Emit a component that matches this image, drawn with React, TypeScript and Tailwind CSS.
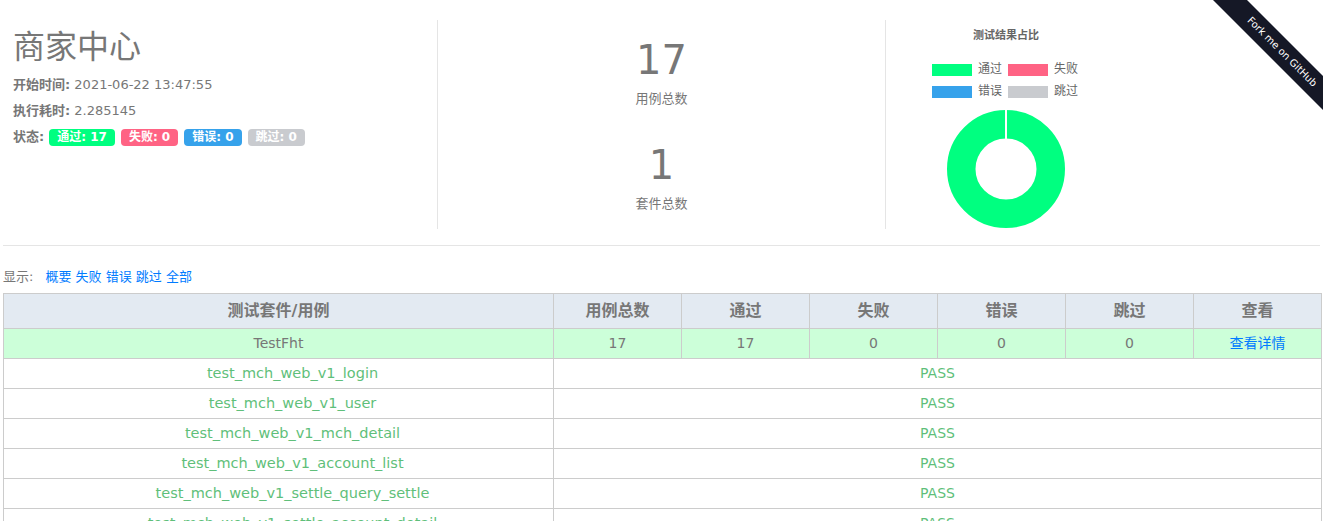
import React from "react"

const cases = [
  "test_mch_web_v1_login",
  "test_mch_web_v1_user",
  "test_mch_web_v1_mch_detail",
  "test_mch_web_v1_account_list",
  "test_mch_web_v1_settle_query_settle",
  "test_mch_web_v1_settle_account_detail",
]

const font = { fontFamily: '"DejaVu Sans", "Noto Sans CJK SC", sans-serif' }

function Badge({ label, color }: { label: string; color: string }) {
  return (
    <span className={`inline-block h-[17px] px-[8px] rounded-[4px] text-white font-bold text-[12px] leading-[17px] ${color}`}>
      {label}
    </span>
  )
}

function Legend({ color, label }: { color: string; label: string }) {
  return (
    <div className="flex items-center gap-[6px] h-[17px]">
      <span className={`w-[40px] h-[12px] ${color}`} />
      <span className="text-[12px] leading-[17px] text-[#666]">{label}</span>
    </div>
  )
}

export default function App() {
  return (
    <div className="relative w-[1323px] h-[521px] overflow-hidden bg-white text-[#777]" style={font}>
      {/* 顶部概览 */}
      <div className="flex pt-[20px] mx-[3px] pb-[16px] border-b border-[#e5e5e5]">
        <div className="w-[435px] h-[209px] border-r border-[#e5e5e5] pl-[10px] pt-[9px]">
          <h1 className="text-[32px] leading-[36px] text-[#777] font-normal">商家中心</h1>
          <p className="mt-[7px] text-[13px] leading-[26px]">
            <b>开始时间:</b> 2021-06-22 13:47:55
          </p>
          <p className="text-[13px] leading-[26px]">
            <b>执行耗时:</b> 2.285145
          </p>
          <div className="flex items-center gap-[6px] text-[13px] leading-[26px]">
            <b className="mr-[-1px]">状态:</b>
            <Badge label="通过: 17" color="bg-[#00ff80]" />
            <Badge label="失败: 0" color="bg-[#ff6384]" />
            <Badge label="错误: 0" color="bg-[#36a2eb]" />
            <Badge label="跳过: 0" color="bg-[#c9cbcf]" />
          </div>
        </div>

        <div className="w-[448px] h-[209px] border-r border-[#e5e5e5] flex flex-col items-center pt-[16px]">
          <div className="text-[40px] leading-[48px]">17</div>
          <div className="mt-[6px] text-[13px] leading-[18px]">用例总数</div>
          <div className="mt-[33px] text-[40px] leading-[48px]">1</div>
          <div className="mt-[6px] text-[13px] leading-[18px]">套件总数</div>
        </div>

        <div className="flex-1 h-[209px] overflow-hidden">
          <div className="w-[240px] flex flex-col items-center">
            <div className="mt-[9px] text-[11px] font-bold text-[#666] leading-[14px]">测试结果占比</div>
            <div className="mt-[18px] grid grid-cols-2 gap-x-[6px] gap-y-[5px] ml-[-2px]">
              <Legend color="bg-[#00ff80]" label="通过" />
              <Legend color="bg-[#ff6384]" label="失败" />
              <Legend color="bg-[#36a2eb]" label="错误" />
              <Legend color="bg-[#c9cbcf]" label="跳过" />
            </div>
            <svg width="120" height="120" viewBox="0 0 120 120" className="mt-[9px] shrink-0">
              <circle cx="60" cy="60" r="44.75" fill="none" stroke="#00ff80" strokeWidth="28.5" />
              <line x1="60" y1="0" x2="60" y2="32" stroke="#fff" strokeWidth="2" />
            </svg>
          </div>
        </div>
      </div>

      {/* 筛选 */}
      <div className="mt-[22px] ml-[3px] text-[13px] leading-[18px] text-[#777]">
        显示:
        <span className="ml-[12px] text-[#007bff]">概要 失败 错误 跳过 全部</span>
      </div>

      {/* 结果表格 */}
      <table className="mt-[7px] ml-[3px] w-[1319px] table-fixed border-collapse text-center">
        <colgroup>
          <col className="w-[550px]" />
          <col className="w-[128px]" />
          <col className="w-[128px]" />
          <col className="w-[128px]" />
          <col className="w-[128px]" />
          <col className="w-[128px]" />
          <col />
        </colgroup>
        <thead>
          <tr className="h-[35px] bg-[#e3eaf2] text-[16px] font-bold text-[#777]">
            <th className="border border-[#ccc] py-0">测试套件/用例</th>
            <th className="border border-[#ccc]">用例总数</th>
            <th className="border border-[#ccc]">通过</th>
            <th className="border border-[#ccc]">失败</th>
            <th className="border border-[#ccc]">错误</th>
            <th className="border border-[#ccc]">跳过</th>
            <th className="border border-[#ccc]">查看</th>
          </tr>
        </thead>
        <tbody className="text-[14px]">
          <tr className="h-[30px] bg-[#ccffd9] text-[#777]">
            <td className="border border-[#ccc]">TestFht</td>
            <td className="border border-[#ccc]">17</td>
            <td className="border border-[#ccc]">17</td>
            <td className="border border-[#ccc]">0</td>
            <td className="border border-[#ccc]">0</td>
            <td className="border border-[#ccc]">0</td>
            <td className="border border-[#ccc] text-[#007bff]">查看详情</td>
          </tr>
          {cases.map((c) => (
            <tr key={c} className="h-[30px] text-[#5fbf7a]">
              <td className="border border-[#ccc] pl-[28px] text-[14.5px]">{c}</td>
              <td colSpan={6} className="border border-[#ccc]">PASS</td>
            </tr>
          ))}
        </tbody>
      </table>

      {/* Fork me ribbon */}
      <div className="absolute top-0 right-0 w-[150px] h-[150px] overflow-hidden pointer-events-none">
        <div className="absolute left-[-11px] top-[40px] w-[240px] h-[24px] rotate-45 bg-[#151826] text-white text-[10px] leading-[24px] text-center">
          Fork me on GitHub
        </div>
      </div>
    </div>
  )
}
